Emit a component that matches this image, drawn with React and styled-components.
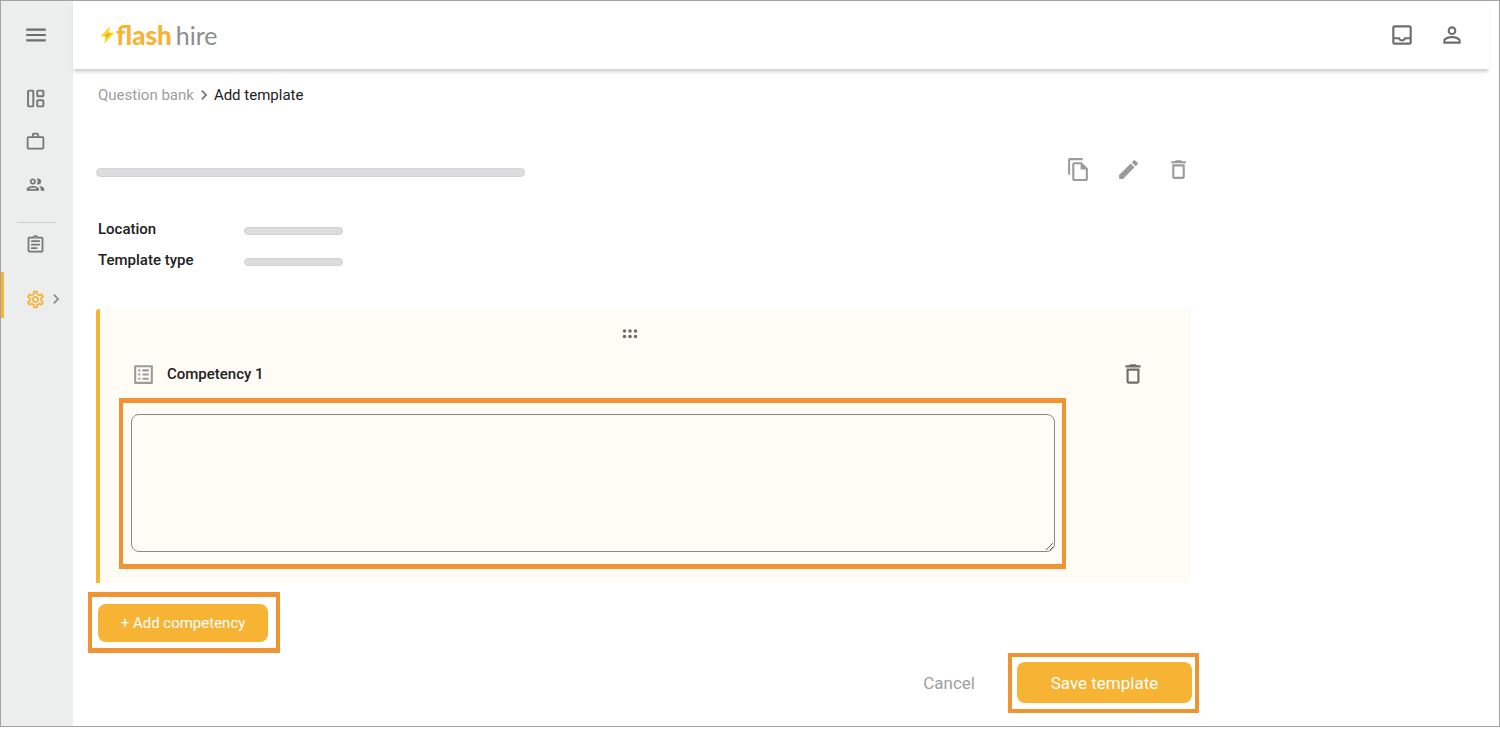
import React, { useState } from 'react'
import styled, { createGlobalStyle } from 'styled-components';
import {
    MdMenu,
    MdWorkOutline,
    MdOutlineAssignment,
    MdOutlineSettings,
    MdChevronRight,
    MdOutlineInbox,
    MdPersonOutline,
    MdOutlineFileCopy,
    MdEdit,
    MdDeleteOutline,
    MdOutlineListAlt,
} from 'react-icons/md';

const DashboardIcon = () => (
    <svg width="21" height="21" viewBox="0 0 24 24" fill="none" stroke="currentColor" strokeWidth="2.2">
        <rect x="3.5" y="3" width="6" height="18" rx="1" />
        <rect x="14" y="3" width="7" height="6.5" rx="1" />
        <rect x="14" y="14" width="7" height="7" rx="1" />
    </svg>
)

const PeopleIcon = () => (
    <svg width="21" height="21" viewBox="0 0 24 24" fill="currentColor">
        <path d="M9 13.75c-2.34 0-7 1.17-7 3.5V19h14v-1.75c0-2.33-4.66-3.5-7-3.5zM4.34 17c.84-.58 2.87-1.25 4.66-1.25s3.82.67 4.66 1.25H4.34zM9 12c1.93 0 3.5-1.57 3.5-3.5S10.93 5 9 5 5.5 6.57 5.5 8.5 7.07 12 9 12zm0-5c.83 0 1.5.67 1.5 1.5S9.83 10 9 10s-1.5-.67-1.5-1.5S8.17 7 9 7zm7.04 6.81c1.16.84 1.96 1.96 1.96 3.44V19h4v-1.75c0-2.02-3.5-3.17-5.96-3.44zM15 12c1.93 0 3.5-1.57 3.5-3.5S16.93 5 15 5c-.54 0-1.04.13-1.5.35.63.89 1 1.98 1 3.15s-.37 2.26-1 3.15c.46.22.96.35 1.5.35z" />
    </svg>
)

const BoltIcon = () => (
    <svg width="15" height="18" viewBox="0 0 15 18">
        <path d="M10 0 L0.5 10.5 L6 10.5 L4 18 L14.5 6.8 L8.8 6.8 Z" fill="#fcdc1c" />
        <path d="M8.8 6.8 L11 7.4 L5.6 13.5 L6 10.5 L4 9.8 Z" fill="#f9a825" />
    </svg>
)

const DragDots = () => (
    <svg width="16" height="10" viewBox="0 0 16 10" fill="currentColor">
        {[2.5, 8, 13.5].map((x) => [2, 7.5].map((y) => (
            <circle key={`${x}-${y}`} cx={x} cy={y} r="1.8" />
        )))}
    </svg>
)

const Sidebar = () => (
    <SidebarContainer>
        <MenuButton aria-label="Menu"><MdMenu size={26} /></MenuButton>
        <NavItem href="#dashboard" aria-label="Dashboard"><DashboardIcon /></NavItem>
        <NavItem href="#jobs" aria-label="Jobs"><MdWorkOutline size={21} /></NavItem>
        <NavItem href="#people" aria-label="People"><PeopleIcon /></NavItem>
        <Divider />
        <NavItem href="#reports" aria-label="Reports"><MdOutlineAssignment size={21} /></NavItem>
        <ActiveItem href="#settings" aria-label="Settings">
            <MdOutlineSettings size={21} />
            <MdChevronRight size={20} color="#8a8c8b" />
        </ActiveItem>
    </SidebarContainer>
)

const Header = () => (
    <HeaderContainer>
        <Logo href="#home">
            <BoltIcon />
            <strong>flash</strong>
            <span>hire</span>
        </Logo>
        <IconGroup>
            <IconButton aria-label="Inbox"><MdOutlineInbox size={26} /></IconButton>
            <IconButton aria-label="Account"><MdPersonOutline size={26} /></IconButton>
        </IconGroup>
    </HeaderContainer>
)

const App = () => {
    const [text, setText] = useState("");

    return (
        <Page>
            <GlobalStyle />
            <Sidebar />
            <Main>
                <Header />
                <Content>
                    <Breadcrumb>
                        <a href="#question-bank">Question bank</a>
                        <MdChevronRight size={20} />
                        <span>Add template</span>
                    </Breadcrumb>

                    <TitleRow>
                        <TitleSkeleton />
                        <IconGroup>
                            <IconButton $light aria-label="Copy"><MdOutlineFileCopy size={25} /></IconButton>
                            <IconButton $light aria-label="Edit"><MdEdit size={25} /></IconButton>
                            <IconButton $light aria-label="Delete template"><MdDeleteOutline size={25} /></IconButton>
                        </IconGroup>
                    </TitleRow>

                    <Details>
                        <dt>Location</dt>
                        <dd><ValueSkeleton /></dd>
                        <dt>Template type</dt>
                        <dd><ValueSkeleton /></dd>
                    </Details>

                    <Card>
                        <DragHandle aria-label="Reorder"><DragDots /></DragHandle>
                        <CardHeader>
                            <MdOutlineListAlt size={25} color="#9b9b9b" />
                            <label htmlFor="competency-1">Competency 1</label>
                            <IconButton aria-label="Delete competency"><MdDeleteOutline size={26} /></IconButton>
                        </CardHeader>
                        <FieldHighlight>
                            <TextArea
                                id="competency-1"
                                value={text}
                                onChange={(e) => setText(e.target.value)}
                            />
                        </FieldHighlight>
                    </Card>

                    <AddHighlight>
                        <AddButton>+ Add competency</AddButton>
                    </AddHighlight>

                    <Footer>
                        <CancelButton>Cancel</CancelButton>
                        <SaveHighlight>
                            <SaveButton>Save template</SaveButton>
                        </SaveHighlight>
                    </Footer>
                </Content>
            </Main>
        </Page>
    )
}

const GlobalStyle = createGlobalStyle`
* {
  box-sizing: border-box;
}

body {
  margin: 0;
  background: #fff;
  font-family: Roboto, "Liberation Sans", sans-serif;
  color: #212121;
}

button {
  padding: 0;
  border: none;
  background: none;
  font-family: inherit;
  cursor: pointer;
}

a {
  color: inherit;
  text-decoration: none;
}

svg {
  display: block;
  flex-shrink: 0;
}
`

const Page = styled.div`
  display: flex;
  border: 1px solid #a3a3a3;
`

const SidebarContainer = styled.nav`
  flex: 0 0 72px;
  background: #eceeed;
  color: #757776;
`

const MenuButton = styled.button`
  display: flex;
  align-items: center;
  width: 100%;
  height: 68px;
  margin-bottom: 8px;
  padding-left: 22px;
  color: #6b6d6c;
`

const NavItem = styled.a`
  display: flex;
  align-items: center;
  height: 43px;
  padding-left: 24px;
`

const ActiveItem = styled(NavItem)`
  height: 46px;
  margin-top: 6px;
  padding-top: 8px;
  padding-left: 21px;
  border-left: 3px solid #f7b334;
  color: #f7b334;
`

const Divider = styled.hr`
  margin: 16px 17px 0 16px;
  border: none;
  border-top: 1px solid #cfd1d0;
`

const Main = styled.main`
  flex: 1;
  min-width: 0;
`

const HeaderContainer = styled.header`
  display: flex;
  align-items: center;
  justify-content: space-between;
  height: 68px;
  margin-right: 10px;
  padding: 0 24px 0 27px;
  box-shadow: 0 4px 3px -1px rgba(0, 0, 0, 0.18);
`

const Logo = styled.a`
  display: flex;
  align-items: baseline;
  font-family: Lato, "Open Sans", sans-serif;
  font-size: 25px;
  line-height: 28px;
  color: #8c8d91;

  svg {
    align-self: center;
  }

  strong {
    margin-left: 1px;
    font-size: 26px;
    font-weight: 900;
    color: #f7b334;
  }

  span {
    margin-left: 4px;
    font-weight: 400;
  }
`

const IconGroup = styled.div`
  display: flex;
  gap: 24px;
`

const IconButton = styled.button`
  display: flex;
  align-items: center;
  justify-content: center;
  width: 26px;
  height: 26px;
  color: ${({ $light }) => ($light ? "#9b9b9b" : "#6e6e6e")};
`

const Content = styled.div`
  max-width: 1141px;
  padding: 16px 23px 13px;
`

const Breadcrumb = styled.div`
  display: flex;
  align-items: center;
  padding-left: 2px;
  font-size: 15px;
  line-height: 20px;

  a {
    color: #9e9e9e;
  }

  svg {
    color: #757575;
  }
`

const TitleRow = styled.div`
  display: flex;
  align-items: center;
  justify-content: space-between;
  margin-top: 51px;
`

const Skeleton = styled.div`
  border: 1px solid #d2d2d3;
  border-radius: 5px;
  background: #dddde0;
`

const TitleSkeleton = styled(Skeleton)`
  width: 429px;
  height: 9px;
  margin-top: 6px;
`

const ValueSkeleton = styled(Skeleton)`
  width: 99px;
  height: 8px;
  margin-top: 4px;
`

const Details = styled.dl`
  display: grid;
  grid-template-columns: 146px 1fr;
  grid-auto-rows: 31px;
  align-items: center;
  margin: 31px 0 34px;
  padding-left: 2px;
  font-size: 15px;

  dt {
    font-weight: 500;
  }

  dd {
    margin: 0;
  }
`

const Card = styled.section`
  padding: 13px 45px 14px 19px;
  border-left: 4px solid #f7b334;
  border-top-left-radius: 3px;
  background: #fffcf5;
`

const DragHandle = styled.button`
  display: flex;
  align-items: center;
  justify-content: center;
  width: 100%;
  height: 24px;
  padding-right: 5px;
  color: #6e6e6e;
`

const CardHeader = styled.div`
  display: flex;
  align-items: center;
  margin-top: 15px;
  padding-left: 12px;
  font-size: 15px;
  font-weight: 500;

  label {
    flex: 1;
    margin-left: 11px;
  }
`

const Highlight = styled.div`
  border: solid #f09433;
  border-width: 5px 4px;
`

const FieldHighlight = styled(Highlight)`
  margin-top: 11px;
  margin-right: 80px;
  padding: 11px 7px 12px 8px;
`

const TextArea = styled.textarea`
  display: block;
  width: 100%;
  height: 138px;
  padding: 12px;
  border: 1px solid #8a8a8a;
  border-radius: 8px;
  background: transparent;
  font: inherit;
  outline: none;
`

const AddHighlight = styled(Highlight)`
  width: fit-content;
  margin: 9px 0 0 -8px;
  padding: 7px 8px 6px 6px;
`

const SaveHighlight = styled(Highlight)`
  border-width: 4px;
  padding: 5px 3px 6px 5px;
`

const YellowButton = styled.button`
  display: block;
  border-radius: 8px;
  background: #f7b334;
  color: #fff;
`

const AddButton = styled(YellowButton)`
  width: 170px;
  height: 38px;
  font-size: 15px;
`

const SaveButton = styled(YellowButton)`
  width: 175px;
  height: 41px;
  font-size: 17px;
`

const Footer = styled.div`
  display: flex;
  align-items: center;
  justify-content: flex-end;
  gap: 33px;
  margin-right: -8px;
`

const CancelButton = styled.button`
  font-size: 17px;
  color: #9e9e9e;
`

export default App
